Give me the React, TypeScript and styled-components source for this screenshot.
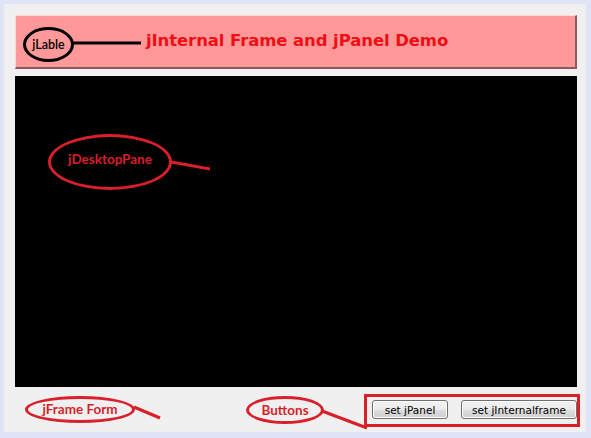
import React from 'react';
import styled, { createGlobalStyle } from 'styled-components';

const GlobalStyle = createGlobalStyle`
  html, body {
    margin: 0;
    padding: 0;
    background: #e1e4f7;
  }
  body {
    font-family: 'DejaVu Sans', Tahoma, sans-serif;
  }
`;

const Screen = styled.div`
  position: relative;
  width: 591px;
  height: 438px;
  padding: 4px 5px 6px 4px;
  box-sizing: border-box;
  background: #e1e4f7;
  overflow: hidden;
`;

const Frame = styled.div`
  height: 100%;
  background: #f0f0f0;
  box-sizing: border-box;
  padding: 11px 9px 0 11px;
  display: flex;
  flex-direction: column;
`;

const HeaderPanel = styled.div`
  height: 54px;
  box-sizing: border-box;
  background: #ff9999;
  border-top: 1px solid #fbd6d6;
  border-left: 1px solid #fbd6d6;
  border-bottom: 2px solid #8a5a5c;
  border-right: 2px solid #8a5a5c;
  display: flex;
  align-items: center;
  padding-left: 130px;
`;

const Title = styled.span`
  color: #f00d14;
  font-family: 'DejaVu Sans', Tahoma, sans-serif;
  font-weight: bold;
  font-size: 16.5px;
  letter-spacing: -0.1px;
  margin-top: -3px;
`;

const DesktopPane = styled.div`
  margin-top: 7px;
  height: 311px;
  background: #000;
`;

const ButtonBar = styled.div`
  flex: 1;
  display: flex;
  justify-content: flex-end;
  align-items: flex-start;
  gap: 13px;
  padding-top: 13px;
`;

const FormButton = styled.button<{ $w: number }>`
  width: ${p => p.$w}px;
  height: 19px;
  padding: 0;
  border: 1px solid #707070;
  border-radius: 3px;
  background: linear-gradient(#f2f2f2 0%, #ebebeb 50%, #dddddd 51%, #cfcfcf 100%);
  box-shadow: inset 0 0 0 1px #fcfcfc;
  font-family: 'DejaVu Sans', Tahoma, sans-serif;
  font-size: 10.5px;
  color: #000;
  line-height: 16px;
`;

const Callout = styled.div<{ $x: number; $y: number; $w: number; $h: number; $c: string; $size: number; $weight: number; $dy?: number }>`
  position: absolute;
  left: ${p => p.$x}px;
  top: ${p => p.$y}px;
  width: ${p => p.$w}px;
  height: ${p => p.$h}px;
  box-sizing: border-box;
  border: 3px solid ${p => p.$c};
  border-radius: 50%;
  display: flex;
  align-items: center;
  justify-content: center;
  color: ${p => p.$c};
  font-family: Lato, 'Open Sans', sans-serif;
  font-weight: ${p => p.$weight};
  font-size: ${p => p.$size}px;
  padding-bottom: ${p => p.$dy ?? 0}px;
`;

const Marker = styled.div`
  position: absolute;
  left: 364px;
  top: 394px;
  width: 216px;
  height: 33px;
  box-sizing: border-box;
  border: 3px solid #d81f2a;
`;

const Leaders = styled.svg`
  position: absolute;
  left: 0;
  top: 0;
  pointer-events: none;
`;

const RED = '#d81f2a';

export default function App() {
  return (
    <>
      <GlobalStyle />
      <Screen>
        <Frame>
          <HeaderPanel>
            <Title>jInternal Frame and jPanel Demo</Title>
          </HeaderPanel>
          <DesktopPane />
          <ButtonBar>
            <FormButton $w={76}>set jPanel</FormButton>
            <FormButton $w={116}>set jInternalframe</FormButton>
          </ButtonBar>
        </Frame>

        <Leaders width="591" height="438">
          <line x1="73" y1="43" x2="141" y2="43" stroke="#000" strokeWidth="3" />
          <line x1="171" y1="162" x2="210" y2="169" stroke={RED} strokeWidth="3" />
          <line x1="134" y1="407" x2="160" y2="418" stroke={RED} strokeWidth="3" />
          <line x1="322" y1="411" x2="367" y2="428" stroke={RED} strokeWidth="3" />
        </Leaders>

        <Callout $x={23} $y={27} $w={51} $h={35} $c="#000" $size={12.5} $weight={600}>jLable</Callout>
        <Callout $x={48} $y={134} $w={124} $h={56} $c={RED} $size={13.5} $weight={700} $dy={6}>jDesktopPane</Callout>
        <Callout $x={25} $y={396} $w={110} $h={27} $c={RED} $size={13.5} $weight={700} $dy={2}>jFrame Form</Callout>
        <Callout $x={246} $y={396} $w={78} $h={28} $c={RED} $size={13.5} $weight={700}>Buttons</Callout>
        <Marker />
      </Screen>
    </>
  );
}
